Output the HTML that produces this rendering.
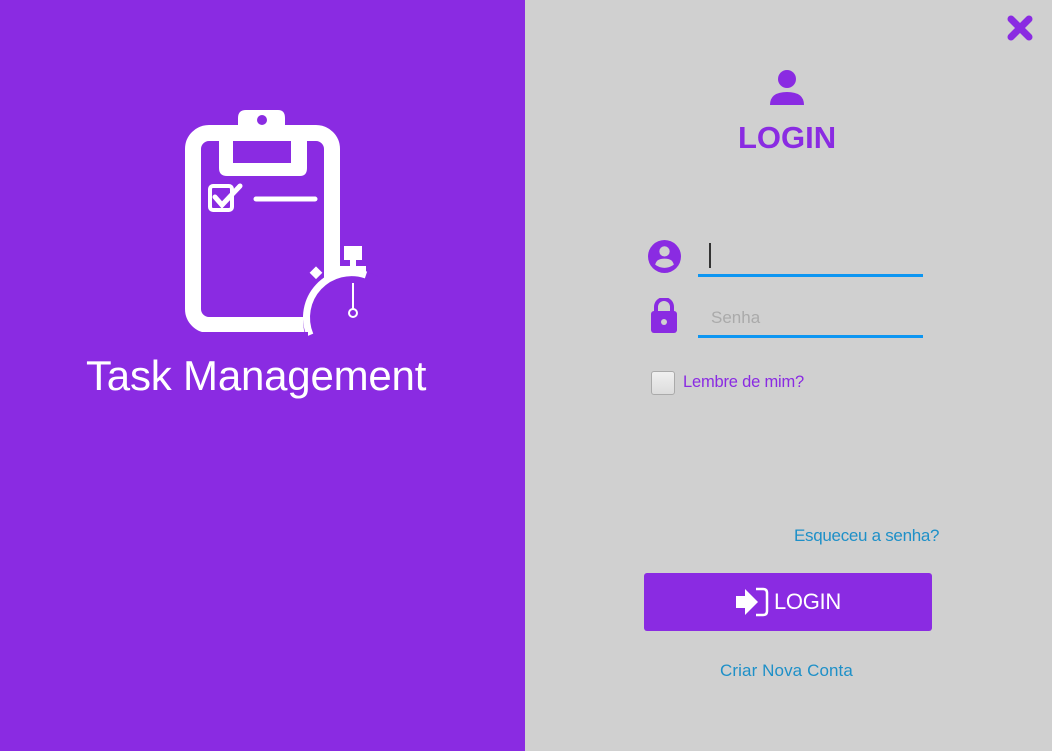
<!DOCTYPE html>
<html><head><meta charset="utf-8"><style>
body{margin:0;width:1052px;height:751px;overflow:hidden;font-family:"Liberation Sans",sans-serif;position:relative;background:#d0d0d0}
.left{position:absolute;left:0;top:0;width:525px;height:751px;background:#8a2be2}
.abs{position:absolute}
</style></head><body>
<div class="left">
<svg class="abs" style="left:180px;top:105px" width="200" height="235" viewBox="180 105 200 235">
 <rect x="193" y="133" width="139" height="192" rx="16" fill="none" stroke="#fff" stroke-width="16"/>
 <path d="M238 118 Q238 110 246 110 L278 110 Q285 110 285 118 L285 130 L300 130 Q307 130 307 138 L307 168 Q307 176 300 176 L227 176 Q219 176 219 168 L219 138 Q219 130 227 130 L238 130Z" fill="#fff"/>
 <rect x="233" y="141" width="58" height="22" fill="#8a2be2"/>
 <circle cx="262" cy="120" r="5" fill="#8a2be2"/>
 <rect x="210" y="186" width="22" height="24" rx="3" fill="none" stroke="#fff" stroke-width="4"/>
 <path d="M215 197 L222 205 L240 186" fill="none" stroke="#fff" stroke-width="5" stroke-linecap="round"/>
 <line x1="256" y1="199" x2="315" y2="199" stroke="#fff" stroke-width="5" stroke-linecap="round"/>
 <circle cx="353" cy="320" r="50" fill="#8a2be2"/>
 <path d="M310 335 A45 45 0 0 1 366 275" fill="none" stroke="#fff" stroke-width="7"/>
 <rect x="344" y="246" width="18" height="14" fill="#fff"/>
 <rect x="350" y="258" width="6" height="10" fill="#fff"/>
 <rect x="336" y="266" width="30" height="6" fill="#fff"/>
 <rect x="312" y="268" width="9" height="9" fill="#fff" transform="rotate(45 316 272)"/>
 <line x1="353" y1="283" x2="353" y2="310" stroke="#fff" stroke-width="2"/>
 <circle cx="353" cy="313" r="4" fill="none" stroke="#fff" stroke-width="2"/>
 <rect x="198" y="332" width="110" height="10" fill="#8a2be2"/>
</svg>
<div class="abs" style="left:86px;top:352px;font-size:42px;color:#fff;letter-spacing:-0.2px">Task Management</div>
</div>
<svg class="abs" style="left:1007px;top:15px" width="26" height="26" viewBox="0 0 26 26"><path d="M4 4 L22 22 M22 4 L4 22" stroke="#8a2be2" stroke-width="7" stroke-linecap="round"/></svg>
<svg class="abs" style="left:768px;top:68px" width="38" height="38" viewBox="0 0 38 38"><circle cx="19" cy="11" r="9" fill="#8a2be2"/><path d="M2 37 Q2 24 19 24 Q36 24 36 37Z" fill="#8a2be2"/></svg>
<div class="abs" style="left:738px;top:120px;font-size:31px;font-weight:bold;color:#8a2be2">LOGIN</div>
<svg class="abs" style="left:648px;top:240px" width="33" height="33" viewBox="0 0 32 32"><circle cx="16" cy="16" r="16" fill="#8a2be2"/><circle cx="16" cy="11" r="5" fill="#d0d0d0"/><path d="M7 24 Q8 18 16 18 Q24 18 25 24 Q16 30 7 24Z" fill="#d0d0d0"/></svg>
<div class="abs" style="left:709px;top:243px;width:2px;height:25px;background:#333"></div>
<div class="abs" style="left:698px;top:274px;width:225px;height:3px;background:#0d96f2"></div>
<svg class="abs" style="left:650px;top:298px" width="28" height="36" viewBox="0 0 28 36"><path d="M6 14 V9 A8 8 0 0 1 22 9 V14" fill="none" stroke="#8a2be2" stroke-width="4"/><rect x="1" y="13" width="26" height="22" rx="3" fill="#8a2be2"/><circle cx="14" cy="24" r="3" fill="#d0d0d0"/></svg>
<div class="abs" style="left:711px;top:308px;font-size:17px;color:#aaa">Senha</div>
<div class="abs" style="left:698px;top:335px;width:225px;height:3px;background:#0d96f2"></div>
<div class="abs" style="left:651px;top:371px;width:22px;height:22px;border:1px solid #aaa;border-radius:3px;background:linear-gradient(#f0f0f0,#dcdcdc)"></div>
<div class="abs" style="left:683px;top:373px;font-size:16.5px;color:#8a2be2;letter-spacing:-0.2px">Lembre de mim?</div>
<div class="abs" style="left:794px;top:526px;font-size:17px;color:#1e90c8;letter-spacing:-0.3px">Esqueceu a senha?</div>
<div class="abs" style="left:644px;top:573px;width:288px;height:58px;background:#8a2be2;border-radius:3px"></div>
<svg class="abs" style="left:735px;top:587px" width="34" height="30" viewBox="0 0 34 30"><path d="M1 9 H10 V2 L23 15 L10 28 V21 H1Z" fill="#fff"/><path d="M21 2 H28 Q32 2 32 6 V24 Q32 28 28 28 H21" fill="none" stroke="#fff" stroke-width="2.5"/></svg>
<div class="abs" style="left:774px;top:589px;font-size:22px;color:#fff;letter-spacing:-0.3px">LOGIN</div>
<div class="abs" style="left:720px;top:661px;font-size:17px;color:#1e90c8;letter-spacing:0.1px">Criar Nova Conta</div>
</body></html>
